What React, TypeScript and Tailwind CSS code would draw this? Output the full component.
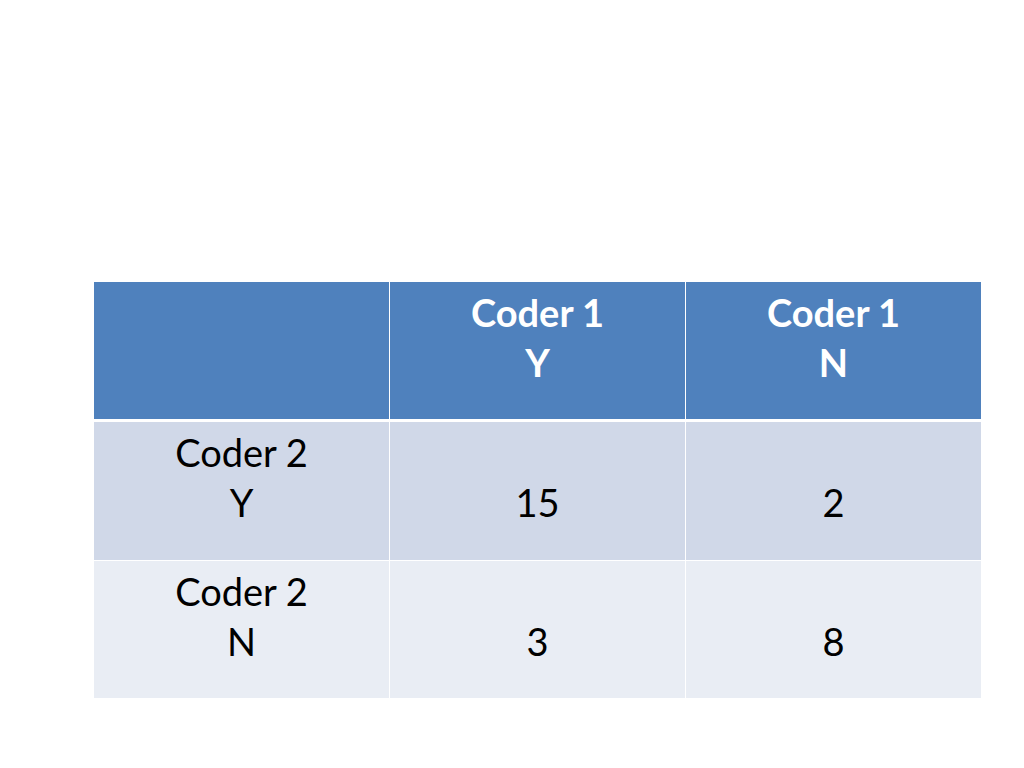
export default function App() {
  const font = { fontFamily: "Lato, 'Open Sans', sans-serif" };
  const row = "grid grid-cols-[295px_295px_295px] gap-x-[1px] text-[38px] leading-[50px]";
  const hdr = "bg-[#4f81bd] text-white font-bold flex flex-col items-center pt-[5px]";
  const cell = "flex flex-col items-center pt-[5px] text-black";
  return (
    <div className="w-[1024px] h-[768px] bg-white" style={font}>
      <div className="pt-[282px] pl-[94px] flex flex-col">
        <div className={`${row} h-[137px]`}>
          <div className={hdr}></div>
          <div className={hdr}>
            <span>Coder 1</span>
            <span>Y</span>
          </div>
          <div className={hdr}>
            <span>Coder 1</span>
            <span>N</span>
          </div>
        </div>

        <div className={`${row} h-[138px] mt-[3px]`}>
          <div className={`${cell} bg-[#d0d8e8]`}>
            <span>Coder 2</span>
            <span>Y</span>
          </div>
          <div className={`${cell} bg-[#d0d8e8]`}>
            <span>&nbsp;</span>
            <span>15</span>
          </div>
          <div className={`${cell} bg-[#d0d8e8]`}>
            <span>&nbsp;</span>
            <span>2</span>
          </div>
        </div>

        <div className={`${row} h-[137px] mt-[1px]`}>
          <div className={`${cell} bg-[#e9edf4]`}>
            <span>Coder 2</span>
            <span>N</span>
          </div>
          <div className={`${cell} bg-[#e9edf4]`}>
            <span>&nbsp;</span>
            <span>3</span>
          </div>
          <div className={`${cell} bg-[#e9edf4]`}>
            <span>&nbsp;</span>
            <span>8</span>
          </div>
        </div>
      </div>
    </div>
  );
}
